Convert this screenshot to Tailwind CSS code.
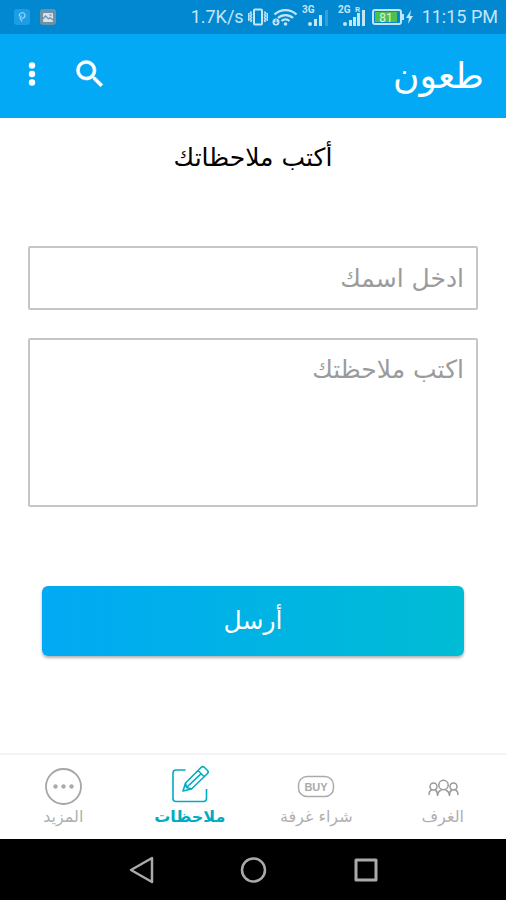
<!DOCTYPE html>
<html lang="ar" dir="rtl">
<head>
<meta charset="utf-8">
<meta name="viewport" content="width=device-width, initial-scale=1">
<title>طعون</title>
<script src="https://cdn.jsdelivr.net/npm/@tailwindcss/browser@4"></script>
</head>
<body class="flex min-h-screen flex-col bg-white font-['DejaVu_Sans',sans-serif] text-black">

  <!-- Status bar -->
  <div dir="ltr" class="flex h-[34px] shrink-0 items-center justify-between bg-[#0288d1] pr-2 pl-3.5 font-[Roboto,sans-serif] text-[#c4e5f7]">
    <div class="flex items-center gap-2.5">
      <svg class="size-4" viewBox="0 0 16 16" aria-hidden="true"><rect width="16" height="16" rx="3" fill="#1b9ee6"/><path d="M5.500 7.500a2.800 2.800 0 1 1 4 1.500l-2 .5M7.500 6.500L6 9l2 3.500" fill="none" stroke="#8fd0f3" stroke-width="1.300"/></svg>
      <svg class="size-4" viewBox="0 0 16 16" aria-hidden="true"><rect width="16" height="16" rx="3" fill="#6d91a8"/><rect x="3" y="4" width="10" height="9" rx="1" fill="#d5e3ea"/><path d="M3 10l2.500-3 3 3 1.500-1.500 3 2.500M9.500 5.500l2 1" fill="none" stroke="#6d91a8" stroke-width="1.200"/></svg>
    </div>
    <div class="flex items-center gap-1">
      <span class="text-lg leading-6">1.7K/s</span>
      <svg class="h-5 w-5" viewBox="0 0 20 20" fill="none" stroke="currentColor" aria-hidden="true"><rect x="6" y="2.500" width="8" height="15" rx="1" stroke-width="2"/><path d="M3.500 4.500l-1 1.500 1 1.500-1 1.500 1 1.500-1 1.500 1 1.500-1 1.500M.8 6v8M16.500 4.500l1 1.500-1 1.500 1 1.500-1 1.500 1 1.500-1 1.500 1 1.500M19.200 6v8" stroke-width="1.500"/></svg>
      <svg class="h-5 w-[26px]" viewBox="0 0 26 20" fill="none" stroke="currentColor" stroke-width="2.300" aria-hidden="true"><path d="M2.500 7.500a16 16 0 0 1 22 0M6 11a11 11 0 0 1 15 0M9.500 14a6 6 0 0 1 8 0"/><circle cx="13.500" cy="17" r="1.800" fill="currentColor" stroke="none"/><circle cx="4" cy="15" r="3.500" fill="currentColor" stroke="none"/><path d="M4 12.500v4M2.500 15l1.500 2 1.500-2" stroke="#0288d1" stroke-width="1"/></svg>
      <svg class="h-6 w-7" viewBox="0 0 28 24" fill="currentColor" role="img" aria-label="3G"><text x="0" y="8" font-size="10" font-weight="700">3G</text><circle cx="8" cy="19" r="2"/><rect x="12" y="14" width="3" height="7"/><rect x="17" y="10" width="3" height="11"/><rect x="23" y="5" width="3" height="16" opacity=".25"/></svg>
      <svg class="ml-1 h-6 w-7" viewBox="0 0 28 24" fill="currentColor" role="img" aria-label="2G"><text x="0" y="8" font-size="10" font-weight="700">2G</text><text x="17" y="7" font-size="8" font-weight="700">R</text><circle cx="7" cy="19" r="2"/><rect x="11" y="15" width="3" height="6"/><rect x="15" y="12" width="3" height="9"/><rect x="19" y="8" width="3" height="13"/><rect x="24" y="5" width="3" height="16"/></svg>
      <svg class="ml-0.5 h-5 w-[42px]" viewBox="0 0 42 20" role="img" aria-label="81"><rect x="1" y="3" width="28" height="14" rx="2" fill="none" stroke="currentColor" stroke-width="2"/><rect x="3" y="5" width="22" height="10" fill="#4fbf4d"/><path d="M30 7h2v6h-2" fill="currentColor"/><text x="14" y="14.500" font-size="12" text-anchor="middle" fill="#d9f3e4">81</text><path d="M39 3l-5 8h3l-1 6 5-8h-3z" fill="currentColor"/></svg>
      <span class="ml-1 text-lg leading-6">11:15 PM</span>
    </div>
  </div>

  <!-- App bar -->
  <header class="flex h-[84px] shrink-0 items-center justify-between bg-[#03a9f4] px-[22px] text-white">
    <h1 class="text-4xl leading-10">طعون</h1>
    <div class="flex items-center gap-[30px] pb-1">
      <button type="button" aria-label="بحث" class="flex size-9 items-center justify-center">
        <svg class="size-9" viewBox="0 0 24 24" fill="currentColor" stroke="currentColor" stroke-width=".4" aria-hidden="true"><path d="M15.500 14h-.79l-.28-.27A6.470 6.470 0 0 0 16 9.500 6.500 6.500 0 1 0 9.500 16c1.610 0 3.090-.59 4.230-1.570l.27.28v.79l5 4.990L20.490 19l-4.990-5zm-6 0C7.010 14 5 11.990 5 9.500S7.010 5 9.500 5 14 7.010 14 9.500 11.990 14 9.500 14z"/></svg>
      </button>
      <button type="button" aria-label="خيارات" class="flex h-9 w-5 items-center justify-center">
        <svg class="h-7 w-2" viewBox="0 0 8 28" fill="currentColor" aria-hidden="true"><circle cx="4" cy="5.500" r="3.200"/><circle cx="4" cy="14" r="3.200"/><circle cx="4" cy="22.500" r="3.200"/></svg>
      </button>
    </div>
  </header>

  <!-- Feedback form -->
  <main class="grow px-7 pt-6">
    <h2 class="text-center text-[25px] leading-8">أكتب ملاحظاتك</h2>
    <form class="mt-[72px]">
      <input type="text" aria-label="ادخل اسمك" placeholder="ادخل اسمك" class="block h-16 w-full rounded-xs border-2 border-[#c6c6c6] px-3 text-[25px] outline-none placeholder:text-[#9b9b9b]">
      <textarea aria-label="اكتب ملاحظتك" placeholder="اكتب ملاحظتك" class="mt-7 block h-[169px] w-full resize-none rounded-xs border-2 border-[#c6c6c6] px-3 py-3.5 text-[25px] leading-8 outline-none placeholder:text-[#9b9b9b]"></textarea>
      <div class="px-3.5 pt-[79px]">
        <button type="submit" class="h-[70px] w-full rounded-md bg-linear-to-r from-[#03a9f4] to-[#00bcd4] text-[25px] text-white shadow-[0_2px_3px_rgba(0,0,0,0.3)]">أرسل</button>
      </div>
    </form>
  </main>

  <!-- Tabs -->
  <nav class="grid h-[86px] shrink-0 grid-cols-4 border-t-2 border-[#f3f3f3] text-[#b0b0b0]">
    <a href="#" class="flex flex-col items-center pt-3">
      <svg class="size-10" viewBox="0 0 40 40" fill="none" stroke="#999" stroke-width="1.500" aria-hidden="true"><circle cx="20.500" cy="18" r="4.700"/><path d="M14.500 29c0-3 1.500-5 4-6M26.500 29c0-3-1.500-5-4-6"/><circle cx="10.500" cy="19.500" r="3.500"/><circle cx="30.500" cy="19.500" r="3.500"/><path d="M6 28c0-2.500 1-4.500 3-5.200M12 23c1.500.7 2.500 2.500 2.500 5M35 28c0-2.500-1-4.500-3-5.200M29 23c-1.500.7-2.500 2.500-2.500 5"/></svg>
      <span class="text-base leading-5">الغرف</span>
    </a>
    <a href="#" class="flex flex-col items-center pt-3">
      <svg class="size-10" viewBox="0 0 40 40" aria-hidden="true"><rect x="2.500" y="9.500" width="35" height="20" rx="8.500" fill="none" stroke="#aaa" stroke-width="1.500"/><text x="20" y="23.500" text-anchor="middle" font-family="Liberation Sans" font-size="11" font-weight="700" fill="#aaa">BUY</text></svg>
      <span class="text-base leading-5">شراء غرفة</span>
    </a>
    <a href="#" aria-current="page" class="flex flex-col items-center pt-3 text-[#00acc1]">
      <svg class="size-10 overflow-visible" viewBox="0 0 40 40" fill="none" stroke="currentColor" stroke-width="1.600" stroke-linejoin="round" aria-hidden="true"><path d="M15.500 3H6Q3 3 3 6V31.500Q3 34.500 6 34.500H33.500Q36.500 34.500 36.500 31.500V22"/><path d="M13 24l2.500-8L31 .5Q32.800-1.200 34.500.5L37.500 3.500Q39 5 37.500 6.500L21.500 22zM28 3.500l6.500 6.500M15.500 16l1 4.500 5 1.500M16.500 20.500L31.200 6.700"/></svg>
      <span class="text-base leading-5 font-bold">ملاحظات</span>
    </a>
    <a href="#" class="flex flex-col items-center pt-3">
      <svg class="size-10" viewBox="0 0 40 40" aria-hidden="true"><circle cx="20.500" cy="19.500" r="17.500" fill="none" stroke="#a6a6a6" stroke-width="1.800"/><g fill="#aaa"><circle cx="12.500" cy="19.500" r="2.200"/><circle cx="20.500" cy="19.500" r="2.200"/><circle cx="28.500" cy="19.500" r="2.200"/></g></svg>
      <span class="text-base leading-5">المزيد</span>
    </a>
  </nav>

  <!-- System navigation -->
  <div dir="ltr" class="flex h-[61px] shrink-0 items-center justify-center gap-20 bg-black text-[#aaa]">
    <button type="button" aria-label="رجوع"><svg class="size-8" viewBox="0 0 32 32" fill="none" stroke="currentColor" stroke-width="2.500" stroke-linejoin="round" aria-hidden="true"><path d="M27 4v24L6 16z"/></svg></button>
    <button type="button" aria-label="الرئيسية"><svg class="size-8" viewBox="0 0 32 32" fill="none" stroke="currentColor" stroke-width="2.500" aria-hidden="true"><circle cx="16.500" cy="16" r="11.500"/></svg></button>
    <button type="button" aria-label="التطبيقات"><svg class="size-8" viewBox="0 0 32 32" fill="none" stroke="currentColor" stroke-width="3" stroke-linejoin="round" aria-hidden="true"><rect x="7" y="6" width="20" height="20"/></svg></button>
  </div>
</body>
</html>
